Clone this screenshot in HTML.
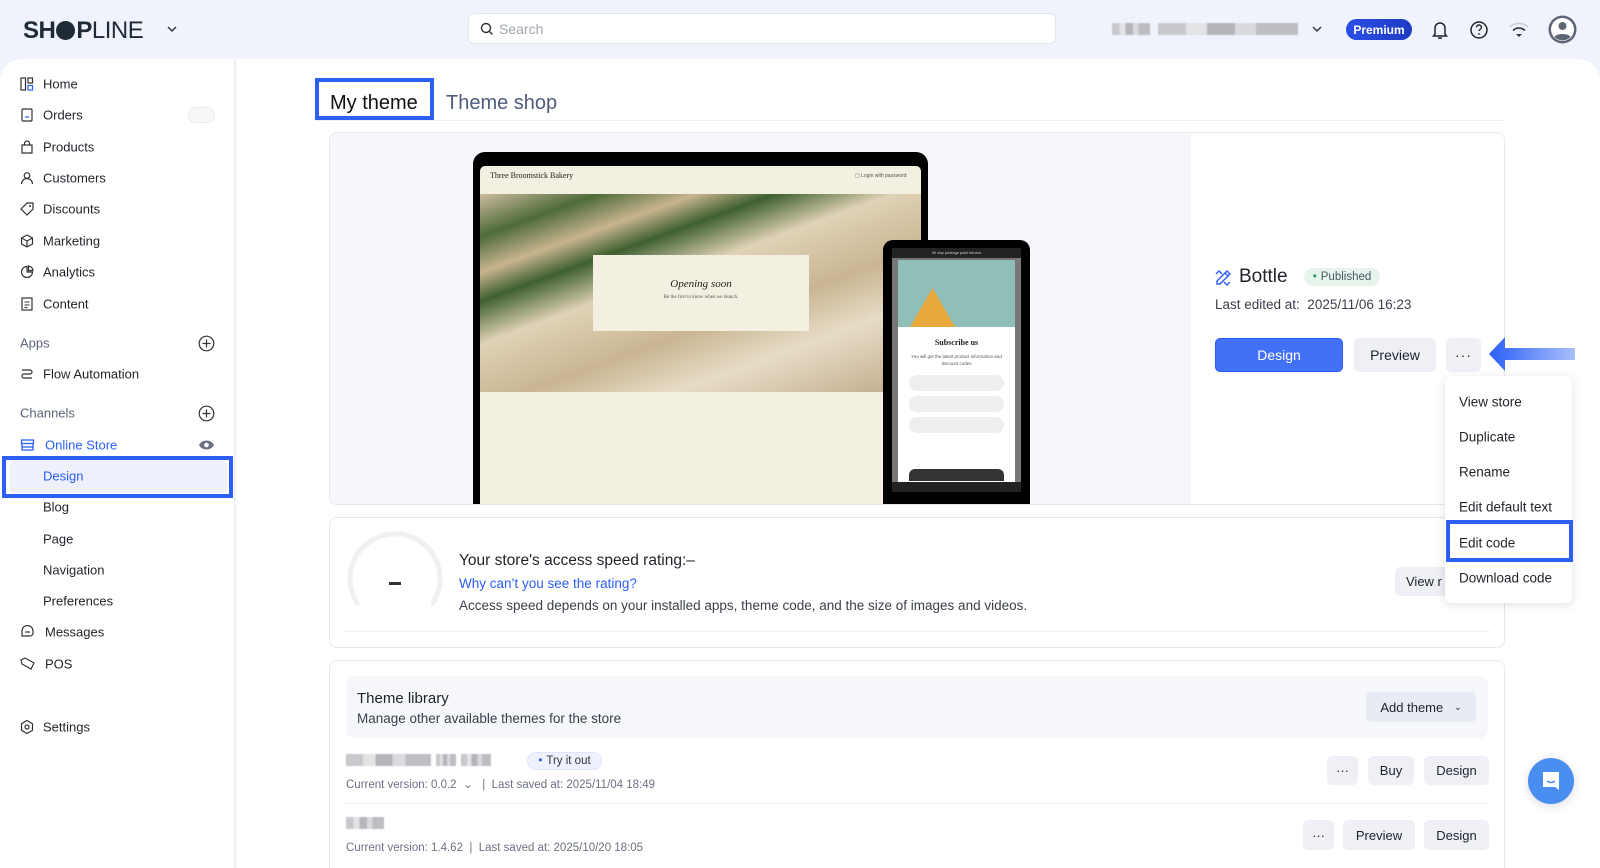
<!DOCTYPE html>
<html style="overflow:hidden;height:868px"><head><meta charset="utf-8">
<style>
*{box-sizing:border-box;margin:0;padding:0}
html,body{width:1600px;height:868px;overflow:hidden}
body{background:#f0f3fb;font-family:"Liberation Sans",sans-serif;color:#1f2329;position:relative}
.a{position:absolute}
.side{left:0;top:59px;width:235px;height:809px;background:#fff;border-top-left-radius:22px;border-right:1px solid #eceef3}
.main{left:236px;top:59px;width:1364px;height:809px;background:#fff;border-top-right-radius:22px}
.ni{position:absolute;left:43px;font-size:13px;color:#1f2329;transform:translateY(-50%)}
.ic{position:absolute;left:20px;transform:translateY(-50%)}
.grp{position:absolute;left:20px;font-size:13px;color:#5b6478;transform:translateY(-50%)}
.btn{position:absolute;background:#eef0f6;border-radius:5px;font-size:13px;display:flex;align-items:center;justify-content:center;color:#1f2329}
.blur{position:absolute;height:12px;background:linear-gradient(90deg,#c9c9cd 0 20%,#e3e3e6 20% 35%,#b5b5ba 35% 55%,#dadade 55% 70%,#bdbdc2 70% 100%);filter:blur(.6px)}
.mi{position:absolute;left:1459px;font-size:13.5px;transform:translateY(-50%)}
</style></head><body>

<!-- top bar -->
<div class="a" style="left:23px;top:17px;font-size:24px;font-weight:700;letter-spacing:-0.5px;color:#1f2a37">SH<span style="display:inline-block;width:19px;height:19px;border-radius:50%;background:#1f2a37;vertical-align:-2px;margin:0 1px"></span>P<span style="font-weight:400">LINE</span></div>
<svg class="a" style="left:166px;top:24px" width="12" height="10" viewBox="0 0 12 10"><path d="M2 3l4 4 4-4" stroke="#333" stroke-width="1.5" fill="none"/></svg>
<div class="a" style="left:468px;top:13px;width:588px;height:31px;background:#fff;border:1px solid #e2e5ec;border-radius:6px"></div>
<svg class="a" style="left:480px;top:22px" width="14" height="14" viewBox="0 0 14 14"><circle cx="6" cy="6" r="4.5" stroke="#333" stroke-width="1.4" fill="none"/><path d="M9.5 9.5l3 3" stroke="#333" stroke-width="1.4"/></svg>
<div class="a" style="left:499px;top:21px;font-size:14px;color:#a0a6b1">Search</div>
<div class="blur" style="left:1112px;top:23px;width:38px"></div>
<div class="blur" style="left:1158px;top:23px;width:140px"></div>
<svg class="a" style="left:1311px;top:24px" width="12" height="10" viewBox="0 0 12 10"><path d="M2 3l4 4 4-4" stroke="#333" stroke-width="1.5" fill="none"/></svg>
<div class="a" style="left:1346px;top:19px;width:66px;height:21px;border-radius:11px;background:linear-gradient(90deg,#2b4ee6,#1f3bc4);color:#fff;font-size:12px;font-weight:700;display:flex;align-items:center;justify-content:center">Premium</div>
<svg class="a" style="left:1431px;top:20px" width="18" height="20" viewBox="0 0 18 20"><path d="M4 14V8a5 5 0 0110 0v6l1.5 2h-13z" stroke="#222" stroke-width="1.5" fill="none"/><path d="M7 18h4" stroke="#222" stroke-width="1.5"/></svg>
<svg class="a" style="left:1469px;top:20px" width="20" height="20" viewBox="0 0 20 20"><circle cx="10" cy="10" r="8" stroke="#222" stroke-width="1.5" fill="none"/><path d="M7.5 7.5a2.5 2.5 0 115 0c0 1.5-2.5 2-2.5 3.5" stroke="#222" stroke-width="1.4" fill="none"/><circle cx="10" cy="14" r=".9" fill="#222"/></svg>
<svg class="a" style="left:1508px;top:21px" width="22" height="18" viewBox="0 0 22 18"><path d="M2 6a13 13 0 0118 0" stroke="#ccc" stroke-width="1.6" fill="none"/><path d="M5 9.5a8.5 8.5 0 0112 0" stroke="#333" stroke-width="1.6" fill="none"/><path d="M8 13l3 3 3-3z" fill="#333"/></svg>
<svg class="a" style="left:1548px;top:15px" width="29" height="29" viewBox="0 0 29 29"><circle cx="14.5" cy="14.5" r="14" fill="#5e6577"/><circle cx="14.5" cy="14.5" r="11.5" fill="#fff"/><circle cx="14.5" cy="11" r="4" fill="#5e6577"/><path d="M6.5 22c2-4 14-4 16 0a11 11 0 01-16 0z" fill="#5e6577"/></svg>

<div class="a side"></div>
<div class="a main"></div>

<!-- sidebar -->
<svg class="ic" style="top:84px" width="14" height="14" viewBox="0 0 14 14"><rect x="1" y="1" width="4.5" height="12" stroke="#333" fill="none" stroke-width="1.2"/><rect x="8" y="1" width="4.5" height="5" stroke="#333" fill="none" stroke-width="1.2"/><rect x="8" y="8.5" width="4.5" height="4.5" stroke="#2b5ef6" fill="none" stroke-width="1.2"/></svg><div class="ni" style="top:84px">Home</div>
<svg class="ic" style="top:115px" width="14" height="14" viewBox="0 0 14 14"><rect x="2" y="1" width="10" height="12" rx="1" stroke="#333" fill="none" stroke-width="1.2"/><path d="M5 9h4" stroke="#2b5ef6" stroke-width="1.2"/></svg><div class="ni" style="top:115px">Orders</div>
<div class="a" style="left:188px;top:107px;width:27px;height:16px;border-radius:8px;border:1px solid #e6e7ea;background:#f8f8f9"></div>
<svg class="ic" style="top:147px" width="14" height="14" viewBox="0 0 14 14"><path d="M2 5h10v8H2z M4.5 5V3.5a2.5 2.5 0 015 0V5" stroke="#333" fill="none" stroke-width="1.2"/></svg><div class="ni" style="top:147px">Products</div>
<svg class="ic" style="top:178px" width="14" height="14" viewBox="0 0 14 14"><circle cx="7" cy="4.5" r="2.8" stroke="#333" fill="none" stroke-width="1.2"/><path d="M1.5 13a5.5 5.5 0 0111 0" stroke="#333" fill="none" stroke-width="1.2"/></svg><div class="ni" style="top:178px">Customers</div>
<svg class="ic" style="top:209px" width="14" height="14" viewBox="0 0 14 14"><path d="M1 7l6-6h6v6l-6 6z" stroke="#333" fill="none" stroke-width="1.2"/><circle cx="10" cy="4" r="1" fill="#333"/></svg><div class="ni" style="top:209px">Discounts</div>
<svg class="ic" style="top:241px" width="14" height="14" viewBox="0 0 14 14"><path d="M7 1l5.5 3v6L7 13 1.5 10V4z M1.5 4L7 7l5.5-3 M7 7v6" stroke="#333" fill="none" stroke-width="1.2"/></svg><div class="ni" style="top:241px">Marketing</div>
<svg class="ic" style="top:272px" width="14" height="14" viewBox="0 0 14 14"><path d="M7 1.5a5.5 5.5 0 105.5 5.5H7z M8.5 1v4.5H13A5 5 0 008.5 1z" stroke="#333" fill="none" stroke-width="1.2"/></svg><div class="ni" style="top:272px">Analytics</div>
<svg class="ic" style="top:304px" width="14" height="14" viewBox="0 0 14 14"><rect x="2" y="1" width="10" height="12" stroke="#333" fill="none" stroke-width="1.2"/><path d="M4.5 5h5M4.5 8h5M4.5 10.5h3" stroke="#333" stroke-width="1.1"/></svg><div class="ni" style="top:304px">Content</div>
<div class="grp" style="top:343px">Apps</div>
<svg class="a" style="left:198px;top:335px" width="17" height="17" viewBox="0 0 17 17"><circle cx="8.5" cy="8.5" r="7.3" stroke="#333" fill="none" stroke-width="1.2"/><path d="M8.5 4.5v8M4.5 8.5h8" stroke="#333" stroke-width="1.2"/></svg>
<svg class="ic" style="top:374px" width="14" height="14" viewBox="0 0 14 14"><path d="M2 3h8a2 2 0 010 4H4a2 2 0 000 4h8" stroke="#333" fill="none" stroke-width="1.2"/></svg><div class="ni" style="top:374px">Flow Automation</div>
<div class="grp" style="top:413px">Channels</div>
<svg class="a" style="left:198px;top:405px" width="17" height="17" viewBox="0 0 17 17"><circle cx="8.5" cy="8.5" r="7.3" stroke="#333" fill="none" stroke-width="1.2"/><path d="M8.5 4.5v8M4.5 8.5h8" stroke="#333" stroke-width="1.2"/></svg>
<svg class="ic" style="top:445px" width="15" height="14" viewBox="0 0 15 14"><path d="M1.5 2h12v3.5h-12zM2 5.5V12h11V5.5M2 9h11" stroke="#2b5ef6" fill="none" stroke-width="1.3"/></svg><div class="ni" style="top:445px;left:45px;color:#2b5ef6">Online Store</div>
<svg class="a" style="left:198px;top:439px" width="17" height="12" viewBox="0 0 17 12"><path d="M1 6c3-6 12-6 15 0-3 6-12 6-15 0z" fill="#6b7385"/><circle cx="8.5" cy="6" r="2.3" fill="#fff"/></svg>
<div class="a" style="left:2px;top:456px;width:231px;height:42px;border:4px solid #2d5ff5;background:#fff"></div>
<div class="a" style="left:10px;top:461px;width:217px;height:32px;background:#eef0fb;border-radius:4px"></div>
<div class="ni" style="top:476px;color:#2b5ef6">Design</div>
<div class="ni" style="top:507px">Blog</div>
<div class="ni" style="top:539px">Page</div>
<div class="ni" style="top:570px">Navigation</div>
<div class="ni" style="top:601px">Preferences</div>
<svg class="ic" style="top:632px" width="15" height="14" viewBox="0 0 15 14"><path d="M2 11V6a5 5 0 0111 0v2a3 3 0 01-3 3z" stroke="#333" fill="none" stroke-width="1.2"/><path d="M5 7h5" stroke="#333" stroke-width="1.2"/></svg><div class="ni" style="top:632px;left:45px">Messages</div>
<svg class="ic" style="top:664px" width="16" height="14" viewBox="0 0 16 14"><path d="M1 3l4-2 9 5-3 6-9-5z" stroke="#333" fill="none" stroke-width="1.2"/></svg><div class="ni" style="top:664px;left:45px">POS</div>
<svg class="ic" style="top:727px" width="14" height="15" viewBox="0 0 14 15"><path d="M7 1l5.5 3.2v6.6L7 14 1.5 10.8V4.2z" stroke="#333" fill="none" stroke-width="1.2"/><circle cx="7" cy="7.5" r="2" stroke="#333" fill="none" stroke-width="1.2"/></svg><div class="ni" style="top:727px">Settings</div>

<!-- tabs -->
<div class="a" style="left:315px;top:120px;width:1190px;height:1px;background:#eceef3"></div>
<div class="a" style="left:315px;top:78px;width:119px;height:42px;border:4px solid #2d5ff5;background:#fff"></div>
<div class="a" style="left:330px;top:92px;font-size:20px;color:#111">My theme</div>
<div class="a" style="left:446px;top:92px;font-size:20px;color:#4e5b7c">Theme shop</div>

<!-- card 1 -->
<div class="a" style="left:329px;top:132px;width:1176px;height:373px;border:1px solid #e6e8ee;border-radius:8px;overflow:hidden;background:#fff">
  <div class="a" style="left:0;top:0;width:861px;height:373px;background:#f6f7fb"></div>
  <div class="a" style="left:143px;top:19px;width:455px;height:360px;background:#000;border-radius:12px 12px 0 0"></div>
  <div class="a" style="left:150px;top:33px;width:441px;height:340px;background:#f3f0e1;border-radius:5px 5px 0 0"></div>
  <div class="a" style="left:160px;top:38px;font-family:'Liberation Serif',serif;font-size:8px;color:#222">Three Broomstick Bakery</div>
  <div class="a" style="left:525px;top:40px;font-size:5px;color:#555">▢ Login with password</div>
  <div class="a" style="left:150px;top:61px;width:441px;height:198px;background:linear-gradient(160deg,#cdbc9d 0%,#4f6b3a 12%,#c8b48f 22%,#3e6030 30%,#e0d2b6 42%,#c9b592 60%,#e7dcc6 75%,#bfa888 100%)"></div>
  <div class="a" style="left:263px;top:122px;width:216px;height:76px;background:#f3f0e1"></div>
  <div class="a" style="left:263px;top:145px;width:216px;text-align:center;font-family:'Liberation Serif',serif;font-style:italic;font-size:11px;color:#222">Opening soon</div>
  <div class="a" style="left:263px;top:162px;width:216px;text-align:center;font-family:'Liberation Serif',serif;font-size:5px;color:#555">Be the first to know when we launch.</div>
  <div class="a" style="left:553px;top:107px;width:147px;height:270px;background:#000;border-radius:10px 10px 0 0"></div>
  <div class="a" style="left:562px;top:115px;width:129px;height:10px;background:#222;color:#ccc;font-size:4px;text-align:center;line-height:10px">30 day postage paid returns</div>
  <div class="a" style="left:562px;top:125px;width:129px;height:230px;background:#777"></div>
  <div class="a" style="left:568px;top:127px;width:117px;height:67px;background:#8fbfb8"></div>
  <div class="a" style="left:580px;top:155px;width:45px;height:39px;background:#e9a83b;clip-path:polygon(50% 0,100% 100%,0 100%)"></div>
  <div class="a" style="left:568px;top:194px;width:117px;height:161px;background:#fff"></div>
  <div class="a" style="left:568px;top:205px;width:117px;text-align:center;font-family:'Liberation Serif',serif;font-size:8px;font-weight:700;color:#222">Subscribe us</div>
  <div class="a" style="left:575px;top:220px;width:103px;text-align:center;font-size:4.5px;color:#555;line-height:7px">You will get the latest product information and discount codes</div>
  <div class="a" style="left:579px;top:242px;width:95px;height:16px;border-radius:8px;background:#eee"></div>
  <div class="a" style="left:579px;top:263px;width:95px;height:16px;border-radius:8px;background:#eee"></div>
  <div class="a" style="left:579px;top:284px;width:95px;height:16px;border-radius:8px;background:#eee"></div>
  <div class="a" style="left:579px;top:336px;width:95px;height:12px;border-radius:6px 6px 0 0;background:#333"></div>
  <div class="a" style="left:562px;top:349px;width:129px;height:10px;background:#222"></div>
  <svg class="a" style="left:884px;top:136px" width="18" height="18" viewBox="0 0 18 18"><path d="M3 12l8-8 3 3-8 8H3zM11 4l2-2 3 3-2 2M2 5l3-3 3 3M10 13l3 3 3-3" stroke="#2b5ef6" fill="none" stroke-width="1.4"/></svg>
  <div class="a" style="left:909px;top:133px;font-size:19px;color:#1f2329">Bottle</div>
  <div class="a" style="left:974px;top:135px;width:76px;height:18px;border-radius:9px;background:#e6f4ec;font-size:11.5px;color:#4b5563;display:flex;align-items:center;justify-content:center"><span style="color:#1aa35d;margin-right:4px">•</span>Published</div>
  <div class="a" style="left:885px;top:164px;font-size:13.5px;color:#3a3f4b">Last edited at:&nbsp; 2025/11/06 16:23</div>
  <div class="a" style="left:885px;top:205px;width:128px;height:34px;border-radius:5px;background:#4270f6;border:1px solid #2b5ef6;color:#fff;font-size:14px;display:flex;align-items:center;justify-content:center">Design</div>
  <div class="btn" style="left:1024px;top:205px;width:82px;height:34px;font-size:14px">Preview</div>
  <div class="btn" style="left:1116px;top:205px;width:35px;height:34px;font-size:14px;letter-spacing:1px">···</div>
</div>
<svg class="a" style="left:1489px;top:337px" width="86" height="34" viewBox="0 0 86 34"><defs><linearGradient id="g" x1="0" x2="1"><stop offset="0" stop-color="#2b5ef6"/><stop offset="1" stop-color="#aac0fb"/></linearGradient></defs><path d="M0 17L16 0v11h70v12H16v11z" fill="url(#g)"/></svg>

<!-- card 2 -->
<div class="a" style="left:329px;top:517px;width:1176px;height:131px;border:1px solid #e6e8ee;border-radius:8px;background:#fff"></div>
<div class="a" style="left:345px;top:631px;width:1145px;height:1px;background:#eef0f3"></div>
<svg class="a" style="left:345px;top:531px" width="100" height="80" viewBox="0 0 100 80"><path d="M12 72A45 45 0 1188 72" stroke="#f0f0f2" stroke-width="5" fill="none" stroke-linecap="round"/></svg>
<div class="a" style="left:389px;top:582px;width:12px;height:3px;background:#333"></div>
<div class="a" style="left:459px;top:552px;font-size:15.5px;color:#1f2329">Your store's access speed rating:–</div>
<div class="a" style="left:459px;top:576px;font-size:13.5px;color:#2b5ef6">Why can’t you see the rating?</div>
<div class="a" style="left:459px;top:598px;font-size:13.5px;color:#3a3f4b">Access speed depends on your installed apps, theme code, and the size of images and videos.</div>
<div class="btn" style="left:1395px;top:567px;width:70px;height:29px;justify-content:flex-start;padding-left:11px">View r</div>

<!-- dropdown -->
<div class="a" style="left:1445px;top:376px;width:127px;height:227px;background:#fff;border-radius:6px;box-shadow:0 2px 10px rgba(0,0,0,.12)"></div>
<div class="mi" style="top:402px">View store</div>
<div class="mi" style="top:437px">Duplicate</div>
<div class="mi" style="top:472px">Rename</div>
<div class="mi" style="top:507px">Edit default text</div>
<div class="a" style="left:1446px;top:520px;width:127px;height:42px;border:4px solid #2d5ff5"></div>
<div class="mi" style="top:543px">Edit code</div>
<div class="mi" style="top:578px">Download code</div>

<!-- card 3 -->
<div class="a" style="left:329px;top:660px;width:1176px;height:230px;border:1px solid #e6e8ee;border-radius:8px;background:#fff"></div>
<div class="a" style="left:346px;top:676px;width:1142px;height:62px;border-radius:8px;background:#f6f7fb"></div>
<div class="a" style="left:357px;top:690px;font-size:15px;color:#1f2329">Theme library</div>
<div class="a" style="left:357px;top:711px;font-size:13.5px;color:#3a3f4b">Manage other available themes for the store</div>
<div class="btn" style="left:1366px;top:692px;width:110px;height:30px;background:#e8eaf4">Add theme&nbsp;&nbsp;&nbsp;<span style="font-size:9px">⌄</span></div>
<div class="blur" style="left:346px;top:754px;width:85px"></div>
<div class="blur" style="left:436px;top:754px;width:20px"></div>
<div class="blur" style="left:461px;top:754px;width:30px"></div>
<div class="a" style="left:527px;top:752px;width:75px;height:18px;border-radius:9px;background:#eef2fe;border:1px solid #dfe6fb;font-size:11.5px;color:#333;display:flex;align-items:center;justify-content:center"><span style="color:#2b5ef6;margin-right:4px">•</span>Try it out</div>
<div class="a" style="left:346px;top:777px;font-size:11.5px;color:#6b7280">Current version: 0.0.2 &nbsp;⌄ &nbsp;&nbsp;| &nbsp;Last saved at: 2025/11/04 18:49</div>
<div class="btn" style="left:1327px;top:756px;width:31px;height:29px">···</div>
<div class="btn" style="left:1368px;top:756px;width:46px;height:29px">Buy</div>
<div class="btn" style="left:1424px;top:756px;width:65px;height:29px">Design</div>
<div class="a" style="left:346px;top:803px;width:1142px;height:1px;background:#eef0f3"></div>
<div class="blur" style="left:346px;top:817px;width:38px"></div>
<div class="a" style="left:346px;top:842px;font-size:11.5px;color:#6b7280">Current version: 1.4.62 &nbsp;| &nbsp;Last saved at: 2025/10/20 18:05</div>
<div class="btn" style="left:1303px;top:820px;width:31px;height:30px">···</div>
<div class="btn" style="left:1343px;top:820px;width:72px;height:30px">Preview</div>
<div class="btn" style="left:1424px;top:820px;width:65px;height:30px">Design</div>

<!-- chat -->
<div class="a" style="left:1528px;top:758px;width:46px;height:46px;border-radius:50%;background:#4a8df0;box-shadow:0 2px 10px rgba(0,0,0,.15)"></div>
<svg class="a" style="left:1540px;top:770px" width="22" height="22" viewBox="0 0 22 22"><path d="M3 2h16v18l-4-3H3z" fill="#fff"/><path d="M7 11q4 3 8 0" stroke="#4a8df0" stroke-width="1.5" fill="none"/></svg>
</body></html>
